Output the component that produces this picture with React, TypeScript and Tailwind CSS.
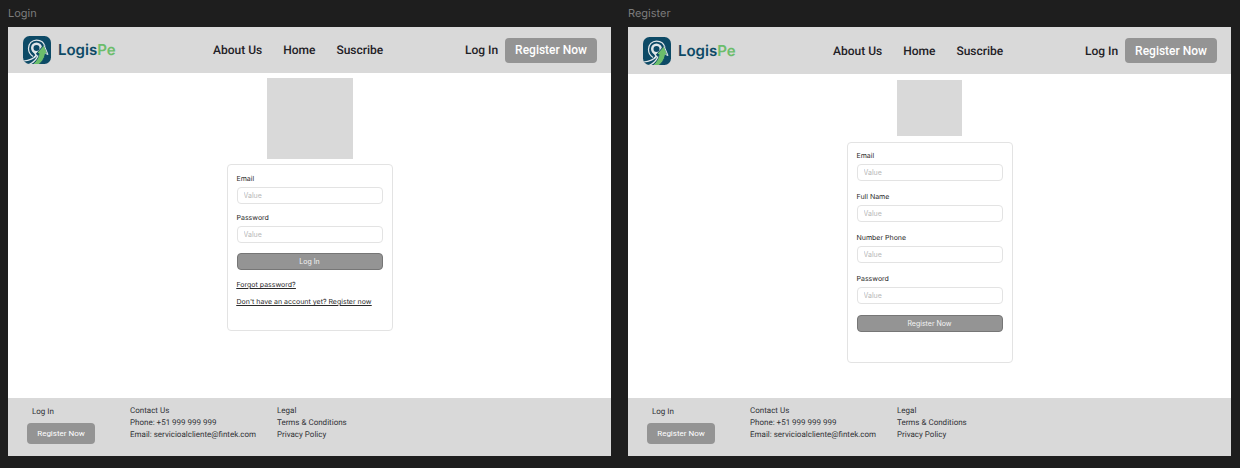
import React, { useId } from "react";

function LogoMark() {
  const clip = useId();
  return (
    <svg viewBox="0 0 56 56" className="size-7 shrink-0" aria-hidden="true">
      <clipPath id={clip}>
        <rect width="56" height="56" rx="13" />
      </clipPath>
      <g clipPath={`url(#${clip})`}>
        <rect width="56" height="56" fill="#0d4a66" />
        <path d="M20 41C14 37 11 31 11 25C11 15 18 8 27 8C35 8 42 13 44 21" fill="none" stroke="#dfe5e8" strokeWidth="2.5" />
        <circle cx="27" cy="24" r="8.5" fill="none" stroke="#dfe5e8" strokeWidth="5" />
        <path d="M20 29C22 33 26 35 26 39L22 43" fill="none" stroke="#dfe5e8" strokeWidth="3" />
        <path d="M1 50C13 49 22 45 28 38" fill="none" stroke="#dfe5e8" strokeWidth="2.5" />
        <path d="M18 58C27 50 31 43 32 35L27 35L42 18L50 37L45 35C43 46 37 54 29 59Z" fill="#6cbd6b" stroke="#0d4a66" strokeWidth="2" />
        <path d="M42 18L50 37L45 35" fill="none" stroke="#dfe5e8" strokeWidth="2" />
        <path d="M12 57C21 53 27 47 30 39" fill="none" stroke="#dfe5e8" strokeWidth="2.5" />
      </g>
    </svg>
  );
}

function Header({ tall }: { tall?: boolean }) {
  return (
    <header
      className={`flex items-center bg-[#d9d9d9] pl-[15px] pr-[14px] font-['Roboto',sans-serif] text-[12px] font-medium leading-4 text-[#1f2126] ${
        tall ? "h-[47px]" : "h-[46px]"
      }`}
    >
      <a href="#home" className="flex w-[190px] shrink-0 items-center gap-[7px]">
        <LogoMark />
        <span className="font-['Inter',sans-serif] text-[15px] font-semibold leading-5 text-[#0d4a66]">
          Logis<span className="text-[#6cbd6b]">Pe</span>
        </span>
      </a>
      <nav className="flex gap-[21px]">
        <a href="#about">About Us</a>
        <a href="#home">Home</a>
        <a href="#subscribe">Suscribe</a>
      </nav>
      <div className="ml-auto flex items-center gap-[7px]">
        <a href="#login">Log In</a>
        <button type="button" className="h-[25px] rounded bg-[#949494] px-[10px] text-white">
          Register Now
        </button>
      </div>
    </header>
  );
}

function Footer() {
  return (
    <footer className="flex h-[58px] bg-[#d9d9d9] pl-[19px] font-['Roboto',sans-serif] text-[8px] leading-3 text-[#303236]">
      <div className="flex w-[103px] flex-col items-start pt-2">
        <a href="#login" className="ml-[5px]">Log In</a>
        <button type="button" className="mt-[5px] h-[21px] w-[68px] rounded bg-[#949494] text-white">
          Register Now
        </button>
      </div>
      <address className="w-[147px] pt-[7px] not-italic">
        <p>Contact Us</p>
        <p>Phone: +51 999 999 999</p>
        <p>Email: servicioalcliente@fintek.com</p>
      </address>
      <div className="flex flex-col pt-[7px]">
        <p>Legal</p>
        <a href="#terms">Terms &amp; Conditions</a>
        <a href="#privacy">Privacy Policy</a>
      </div>
    </footer>
  );
}

function Field({ label, type = "text" }: { label: string; type?: string }) {
  const id = useId();
  return (
    <div className="flex flex-col gap-[3px]">
      <label htmlFor={id} className="leading-[10px]">{label}</label>
      <input
        id={id}
        type={type}
        placeholder="Value"
        className="h-[17px] w-full rounded border border-[#e3e3e3] bg-white px-[6px] placeholder:text-[#b8b8b8]"
      />
    </div>
  );
}

function SubmitButton({ children }: { children: React.ReactNode }) {
  return (
    <button type="submit" className="h-[17px] w-full rounded border border-[#767676] bg-[#949494] text-[#f3f3f3]">
      {children}
    </button>
  );
}

const cardClass =
  "flex w-[166px] flex-col rounded border border-[#e3e3e3] px-[9px] font-['Inter',sans-serif] text-[7px] leading-[10px] text-[#2a2a2a]";

function Frame({ title, tall, children }: { title: string; tall?: boolean; children: React.ReactNode }) {
  return (
    <section className="flex flex-col">
      <h2 className="h-[27px] pt-[5px] font-['Inter',sans-serif] text-[11px] leading-4 text-[#7c7c7c]">{title}</h2>
      <div className="flex flex-1 flex-col bg-white">
        <Header tall={tall} />
        <main className="flex flex-1 flex-col items-center">{children}</main>
        <Footer />
      </div>
    </section>
  );
}

export default function App() {
  return (
    <div className="grid min-h-screen grid-cols-2 gap-[17px] bg-[#1e1e1e] pb-3 pl-2 pr-[9px] [text-rendering:geometricPrecision]">
      <Frame title="Login">
        <div className="mt-[5px] h-[81px] w-[86px] bg-[#d9d9d9]" />
        <form className={`${cardClass} mt-[5px] pb-[23px] pt-[9px]`} onSubmit={(e) => e.preventDefault()}>
          <div className="mb-[10px] flex flex-col gap-[9px]">
            <Field label="Email" type="email" />
            <Field label="Password" type="password" />
          </div>
          <SubmitButton>Log In</SubmitButton>
          <div className="mt-[10px] flex flex-col items-start gap-[7px] underline">
            <a href="#forgot">Forgot password?</a>
            <a href="#register" className="whitespace-nowrap">Don't have an account yet? Register now</a>
          </div>
        </form>
      </Frame>
      <Frame title="Register" tall>
        <div className="mt-[6px] h-[56px] w-[65px] bg-[#d9d9d9]" />
        <form className={`${cardClass} mt-[6px] pb-[30px] pt-2`} onSubmit={(e) => e.preventDefault()}>
          <div className="mb-[11px] flex flex-col gap-[11px]">
            <Field label="Email" type="email" />
            <Field label="Full Name" />
            <Field label="Number Phone" type="tel" />
            <Field label="Password" type="password" />
          </div>
          <SubmitButton>Register Now</SubmitButton>
        </form>
      </Frame>
    </div>
  );
}
